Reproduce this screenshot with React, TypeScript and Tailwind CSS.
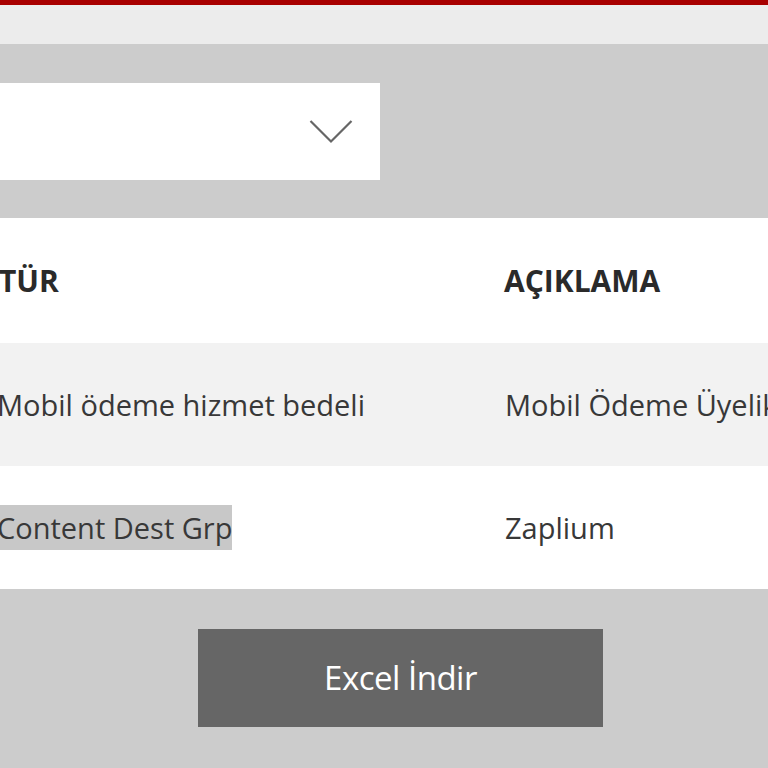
import React from 'react';

const rows = [
  { type: 'Mobil ödeme hizmet bedeli', desc: 'Mobil Ödeme Üyelik Ücreti', bg: 'bg-[#f2f2f2]' },
  { type: 'Content Dest Grp', desc: 'Zaplium', bg: 'bg-white', selected: true },
];

const App: React.FC = () => {
  return (
    <div className="w-[768px] h-[768px] overflow-hidden bg-[#cccccc] text-[#383838]" style={{ fontFamily: '"Open Sans", "Noto Sans", sans-serif' }}>
      {/* Top bar */}
      <div className="h-[5px] bg-[#a80000]" />
      <div className="h-[39px] bg-[#ececec]" />

      {/* Filter */}
      <div className="pt-[39px] pb-[38px]">
        <div className="w-[380px] h-[97px] bg-white flex items-center justify-end pr-[27px]">
          <svg width="44" height="26" viewBox="0 0 44 26" fill="none">
            <path d="M1.5 2 L22 22.5 L42.5 2" stroke="#666666" strokeWidth="2.2" />
          </svg>
        </div>
      </div>

      {/* Table */}
      <div className="bg-white">
        <div className="h-[125px] flex items-center text-[30px] font-bold text-[#2a2a2a]">
          <div className="w-[505px] -ml-[1px] shrink-0">TÜR</div>
          <div className="flex-1 whitespace-nowrap">AÇIKLAMA</div>
        </div>
        {rows.map((r) => (
          <div key={r.type} className={`h-[123px] flex items-center text-[29px] whitespace-nowrap overflow-hidden ${r.bg}`}>
            <div className="w-[508px] -ml-[3px] shrink-0">
              <span className={r.selected ? 'bg-[#c8c8c8] py-[3px]' : ''}>{r.type}</span>
            </div>
            <div className="shrink-0">{r.desc}</div>
          </div>
        ))}
      </div>

      {/* Footer */}
      <div className="flex pt-[40px] pl-[198px]">
        <button className="w-[405px] h-[98px] bg-[#666666] text-white text-[33px] tracking-[-0.5px]">
          Excel İndir
        </button>
      </div>
    </div>
  );
};

export default App;
